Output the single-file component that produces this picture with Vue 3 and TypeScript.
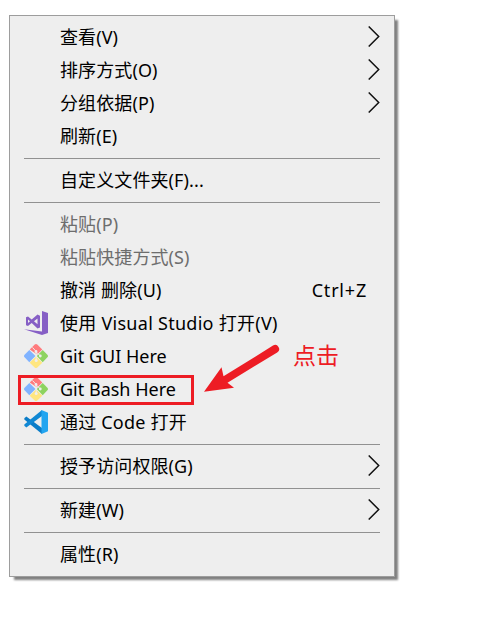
<script setup lang="ts">
interface Item {
  text: string
  hint?: string
  arrow?: boolean
  disabled?: boolean
  icon?: 'vs' | 'git' | 'code'
  marked?: boolean
}

const groups: Item[][] = [
  [
    { text: '查看(V)', arrow: true },
    { text: '排序方式(O)', arrow: true },
    { text: '分组依据(P)', arrow: true },
    { text: '刷新(E)' },
  ],
  [{ text: '自定义文件夹(F)...' }],
  [
    { text: '粘贴(P)', disabled: true },
    { text: '粘贴快捷方式(S)', disabled: true },
    { text: '撤消 删除(U)', hint: 'Ctrl+Z' },
    { text: '使用 Visual Studio 打开(V)', icon: 'vs' },
    { text: 'Git GUI Here', icon: 'git' },
    { text: 'Git Bash Here', icon: 'git', marked: true },
    { text: '通过 Code 打开', icon: 'code' },
  ],
  [{ text: '授予访问权限(G)', arrow: true }],
  [{ text: '新建(W)', arrow: true }],
  [{ text: '属性(R)' }],
]
</script>

<template>
  <main class="page">
    <div class="menu">
      <div v-for="(group, g) in groups" :key="g" class="group">
        <div v-for="item in group" :key="item.text" class="item" :class="[item.icon, { disabled: item.disabled }]">
          <span class="icon">
            <svg v-if="item.icon === 'vs'" width="24" height="24" viewBox="0 0 24 24">
              <path fill="#865fc5" fill-rule="evenodd" d="M18 0l6 2v20l-6 2L0 18.200l18 2.300z M2 6.300l2-.8 3.700 3L13.500 3.500 16 4.700v11.800l-2.500 1-5.800-5.400L4 15l-2-.8z M4 8.500v3.600l2-1.800z M13.500 7.500l-3.500 2.800 3.500 2.900z" />
            </svg>
            <svg v-else-if="item.icon === 'git'" width="24" height="24" viewBox="0 0 24 24">
              <path fill="#ff7b7d" d="M12 0q.7 0 1.300.6L18.300 5.500 13.200 10.600 5.700 5.500 10.700.6Q11.300 0 12 0z" />
              <path fill="#80b3ff" d="M5.300 5.900l6.200 6.100-6.200 6.200L.6 13.300q-1.200-1.300 0-2.600z" />
              <path fill="#8dd35f" d="M18.700 5.900l4.700 4.800q1.200 1.300 0 2.600l-4.700 4.900-5.900-6.200z" />
              <path fill="#ffe680" d="M12 12.500l6.300 6.200-5 4.700q-1.300 1.200-2.600 0L5.700 18.700z" />
              <path fill="none" stroke="#eee" stroke-width="1" d="M8.500 3.500l3.700 4V17M12.200 8l4.300 4" />
              <g fill="#eee">
                <circle cx="12" cy="7.500" r="1.400" />
                <circle cx="16.300" cy="12" r="1.400" />
                <circle cx="12.200" cy="16.600" r="1.500" />
              </g>
            </svg>
            <svg v-else-if="item.icon === 'code'" width="24" height="24" viewBox="0 0 24 24">
              <path fill="#0b7dc8" d="M.3 8.200L2.300 6.400 18 18v6L.3 9.400z" />
              <path fill="#1188d4" d="M.3 15.800l2 1.800L18 6V0L.3 14.600z" />
              <path fill="#23a5f0" d="M17.500 0L24 2.800v18.400L17.500 24z" />
            </svg>
          </span>
          <span class="label">{{ item.text }}</span>
          <span v-if="item.hint" class="hint">{{ item.hint }}</span>
          <svg v-if="item.arrow" class="arrow" width="12" height="21" viewBox="0 0 12 21">
            <path d="M.7 .5l10 10-10 10" />
          </svg>
          <span v-if="item.marked" class="mark"></span>
        </div>
      </div>
      <svg class="pointer" width="80" height="52" viewBox="200 342 80 52">
        <path d="M204 391.700L221.500 367.300 223.500 376.300 273 345.600A3.900 3.900 0 0 1 277.200 352.400L227.500 382.800 234 387.800z" />
      </svg>
      <span class="note">点击</span>
    </div>
  </main>
</template>

<style>
body {
  background: #fff;
}
</style>

<style scoped>
.page {
  box-sizing: border-box;
  height: 618px;
  padding: 15px 0 0 9px;
  overflow: hidden;
  font-family: 'Noto Sans', 'Noto Sans CJK SC', sans-serif;
  font-size: 18px;
  color: #000;
}
.menu {
  position: relative;
  box-sizing: border-box;
  width: 386px;
  height: 562px;
  padding: 4px 14px 6px;
  border: 1px solid #9d9d9d;
  background: #eee;
  box-shadow: 4px 4px 2px -1px #808080;
}
.group + .group {
  padding-top: 11px;
  background: linear-gradient(#919191, #919191) 0 6px / 100% 1px no-repeat;
}
.item {
  position: relative;
  display: flex;
  align-items: center;
  height: 33px;
  line-height: 33px;
  white-space: nowrap;
  letter-spacing: 0.1px;
}
.vs {
  letter-spacing: 0.27px;
}
.git {
  letter-spacing: 0;
}
.code {
  letter-spacing: 0.2px;
}
.disabled {
  color: #6d6d6d;
}
.icon {
  width: 24px;
  height: 24px;
  margin-right: 12px;
}
.icon svg {
  display: block;
}
.label {
  flex: 1;
  padding-top: 2px;
}
.hint {
  margin-right: 13px;
  padding-top: 2px;
  letter-spacing: 0.8px;
}
.arrow {
  fill: none;
  stroke: #111;
  stroke-width: 1.500;
}
.mark {
  position: absolute;
  box-sizing: border-box;
  left: -6px;
  top: 3px;
  width: 176px;
  height: 30px;
  border: 3px solid #ed1c24;
}
.pointer {
  position: absolute;
  left: 190px;
  top: 326px;
  fill: #ed1c24;
}
.note {
  position: absolute;
  left: 283px;
  top: 323px;
  font-size: 23px;
  line-height: 33px;
  color: #ed1c24;
}
</style>
